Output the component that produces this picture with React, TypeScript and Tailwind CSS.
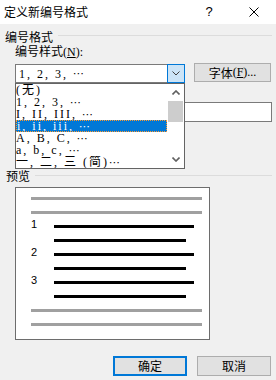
const CJK = "font-['Noto_Sans_CJK_SC',sans-serif]";
const SER = "font-['Liberation_Serif','Noto_Sans_CJK_SC',serif]";

function Ell() {
  return <span className="font-['DejaVu_Sans',sans-serif] tracking-normal text-[11px] leading-none">⋯</span>;
}

function Chevron({ up, color, thin }: { up?: boolean; color: string; thin?: boolean }) {
  return (
    <svg width="8" height="5" viewBox="0 0 8 5" className="block">
      <polyline
        points={up ? "0.5,4.5 4,1 7.5,4.5" : "0.5,0.5 4,4 7.5,0.5"}
        fill="none"
        stroke={color}
        strokeWidth={thin ? 1 : 1.6}
      />
    </svg>
  );
}

function GrayLine() {
  return <div className="ml-[15px] w-[171px] h-[3px] bg-[#a0a0a0]" />;
}

function BlackLine({ long, num }: { long?: boolean; num?: string }) {
  return (
    <div className="flex items-center h-[3px] ml-[15px]">
      <div className="w-[23px] h-[3px] flex items-center">
        {num && (
          <span className="font-['Liberation_Sans',sans-serif] text-[11px] leading-[3px] relative -top-[2px]">{num}</span>
        )}
      </div>
      <div className={long ? "w-[140px] h-[3px] bg-black" : "w-[132px] h-[3px] bg-black"} />
    </div>
  );
}

function Item({ text, sel }: { text: string; sel?: boolean }) {
  return (
    <div
      className={
        sel
          ? "h-[12px] flex items-center whitespace-pre overflow-hidden bg-[#0078d7] text-white border border-dotted border-[#ff9a2e]"
          : "h-[12px] flex items-center whitespace-pre overflow-hidden"
      }
    >
      <span className="leading-[12px]">{text}</span>
      <Ell />
    </div>
  );
}

export default function App() {
  return (
    <div className={`w-[276px] h-[380px] bg-[#f0f0f0] relative overflow-hidden text-black text-[12px] ${CJK}`}>
      {/* title bar */}
      <div className="h-[24px] bg-white flex items-center pl-[4px] pr-[17px]">
        <span className="flex-1 leading-[14px]">定义新编号格式</span>
        <span className="w-[10px] text-center leading-[14px] font-['Liberation_Sans',sans-serif] text-[13px]">?</span>
        <div className="w-[35px]" />
        <svg width="10" height="10" viewBox="0 0 10 10" className="block">
          <path d="M0.5 0.5 L9.5 9.5 M9.5 0.5 L0.5 9.5" stroke="#000" strokeWidth="1" fill="none" />
        </svg>
      </div>

      {/* group header */}
      <div className="mt-[6px] flex h-[14px]">
        <span className="pl-[5px] leading-[14px]">编号格式</span>
        <div className="flex-1 h-px bg-[#dcdcdc] ml-[5px] mr-[4px] mt-[5px]" />
      </div>
      <div className="h-[14px] leading-[14px] pl-[15px]">
        编号样式<span className={SER}>(<span className="underline">N</span>):</span>
      </div>

      {/* combobox row */}
      <div className="mt-[5px] flex items-start pl-[15px]">
        <div className="mt-[1px] flex w-[170px] h-[19px]">
          <div className={`flex-1 bg-white border-y border-l border-[#7a7a7a] pl-[3px] flex items-center whitespace-pre tracking-[2px] ${SER}`}>
            <span className="leading-[12px]">1, 2, 3, </span>
            <Ell />
          </div>
          <div className="w-[18px] h-[19px] border border-[#0078d7] bg-[#cce4f7] flex items-center justify-center">
            <Chevron color="#404040" thin />
          </div>
        </div>
        <div className="ml-[9px] w-[77px] h-[19px] border border-[#adadad] bg-[#e1e1e1] flex items-center justify-center leading-[17px]">
          字体<span className={SER}>(<span className="underline">F</span>)...</span>
        </div>
      </div>

      {/* number format input */}
      <div className="mt-[19px] ml-[15px] w-[257px] h-[20px] border border-[#7a7a7a] bg-white" />

      {/* preview header */}
      <div className="mt-[47px] flex h-[14px]">
        <span className="pl-[6px] leading-[14px]">预览</span>
        <div className="flex-1 h-px bg-[#dcdcdc] ml-[5px] mr-[4px] mt-[6px]" />
      </div>

      {/* preview box */}
      <div className="mt-[4px] ml-[15px] w-[195px] h-[153px] border border-[#6d6d6d] bg-white pt-[9px] flex flex-col gap-[11px]">
        <GrayLine />
        <GrayLine />
        <BlackLine long num="1" />
        <BlackLine />
        <BlackLine long num="2" />
        <BlackLine />
        <BlackLine long num="3" />
        <BlackLine />
        <GrayLine />
        <GrayLine />
      </div>

      {/* buttons */}
      <div className="mt-[16px] flex justify-end pr-[5px] gap-[10px]">
        <div className="w-[74px] h-[20px] border-2 border-[#0078d7] bg-[#e1e1e1] flex items-center justify-center leading-[16px]">
          确定
        </div>
        <div className="w-[74px] h-[20px] border border-[#adadad] bg-[#e1e1e1] flex items-center justify-center leading-[18px]">
          取消
        </div>
      </div>

      {/* open dropdown list (overlay) */}
      <div className="absolute left-[15px] top-[83px] w-[170px] h-[86px] border border-[#646464] bg-white flex">
        <div className={`flex-1 flex flex-col ${SER} tracking-[2px]`}>
          <div className="h-[12px] flex items-center overflow-hidden">
            <span className="leading-[12px]">(无)</span>
          </div>
          <Item text="1, 2, 3, " />
          <Item text="I, II, III, " />
          <Item text="i, ii, iii, " sel />
          <Item text="A, B, C, " />
          <Item text="a, b, c, " />
          <Item text="一, 二, 三 (简)" />
        </div>
        <div className="w-[17px] flex flex-col">
          <div className="h-[17px] flex items-center justify-center">
            <Chevron up color="#606060" />
          </div>
          <div className="mx-[1px] h-[21px] bg-[#cdcdcd]" />
          <div className="flex-1" />
          <div className="h-[17px] flex items-center justify-center">
            <Chevron color="#606060" />
          </div>
        </div>
      </div>
    </div>
  );
}
